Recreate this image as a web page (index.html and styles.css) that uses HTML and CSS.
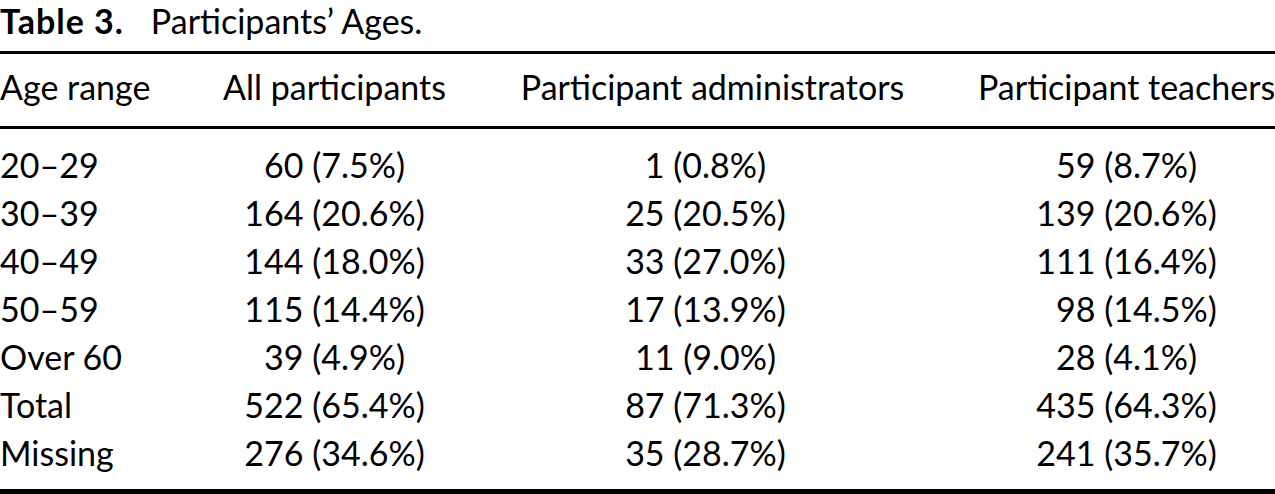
FILE: index.html
```html
<!DOCTYPE html>
<html lang="en">
<head>
<meta charset="utf-8">
<title>Table 3. Participants’ Ages.</title>
<link rel="stylesheet" href="styles.css">
</head>
<body>
<table class="ages">
  <caption class="title"><span class="label">Table 3.</span>Participants’ Ages.</caption>
  <colgroup>
    <col class="c1"><col class="c2"><col class="c3"><col class="c4">
  </colgroup>
  <thead>
    <tr>
      <th class="first">Age range</th>
      <th>All participants</th>
      <th>Participant administrators</th>
      <th class="last">Participant teachers</th>
    </tr>
  </thead>
  <tbody>
    <tr class="top"><td class="first">20–29</td><td>60 (7.5%)</td><td class="mid">1 (0.8%)</td><td class="last">59 (8.7%)</td></tr>
    <tr><td class="first">30–39</td><td>164 (20.6%)</td><td class="mid">25 (20.5%)</td><td class="last">139 (20.6%)</td></tr>
    <tr><td class="first">40–49</td><td>144 (18.0%)</td><td class="mid">33 (27.0%)</td><td class="last">111 (16.4%)</td></tr>
    <tr><td class="first">50–59</td><td>115 (14.4%)</td><td class="mid">17 (13.9%)</td><td class="last">&#8199;98 (14.5%)</td></tr>
    <tr><td class="first">Over 60</td><td>39 (4.9%)</td><td class="mid">11 (9.0%)</td><td class="last">28 (4.1%)</td></tr>
    <tr><td class="first">Total</td><td>522 (65.4%)</td><td class="mid">87 (71.3%)</td><td class="last">435 (64.3%)</td></tr>
    <tr class="end"><td class="first">Missing</td><td>276 (34.6%)</td><td class="mid">35 (28.7%)</td><td class="last">241 (35.7%)</td></tr>
  </tbody>
</table>
</body>
</html>
```
FILE: styles.css
```css
html, body {
  margin: 0;
  padding: 0;
  background: #fff;
}

body {
  font-family: "Lato", "Liberation Sans", sans-serif;
  font-size: 34px;
  color: #000;
  overflow: hidden;
}

.ages {
  width: 1275px;
  table-layout: fixed;
  border-collapse: separate;
  border-spacing: 0;
}

.c1 { width: 186px; }
.c2 { width: 297px; }
.c3 { width: 459px; }
.c4 { width: 333px; }

.title {
  caption-side: top;
  text-align: left;
  line-height: 41px;
  padding: 0 0 10px 0;
  white-space: nowrap;
}

.label {
  font-weight: 700;
  letter-spacing: 1px;
  margin-right: 27px;
}

th {
  font-weight: 400;
  text-align: center;
  white-space: nowrap;
  line-height: 40px;
  padding: 13px 0 19px 0;
  border-top: 3px solid #000;
  border-bottom: 3px solid #000;
}

td {
  text-align: center;
  white-space: nowrap;
  line-height: 48px;
  padding: 0;
}

th.first, td.first {
  text-align: left;
}

th.last, td.last {
  padding-left: 36px;
}

td.mid {
  padding-right: 14px;
}

tr.top td {
  padding-top: 12px;
}

tr.end td {
  padding-bottom: 12px;
  border-bottom: 5px solid #000;
}
```
